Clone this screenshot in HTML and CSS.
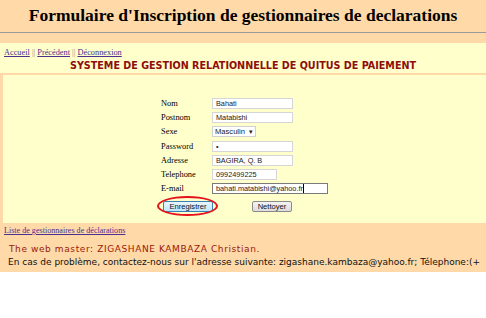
FILE: index.html
```html
<!DOCTYPE html>
<html lang="fr">
<head>
<meta charset="utf-8">
<title>Formulaire d'Inscription</title>
<link rel="stylesheet" href="styles.css">
</head>
<body>
<div class="page">
  <header class="top">
    <h1 class="title">Formulaire d'Inscription de gestionnaires de declarations</h1>
  </header>
  <div class="band"></div>
  <main class="main">
    <nav class="nav"><a href="#">Accueil</a> || <a href="#">Précédent</a> || <a href="#">Déconnexion</a></nav>
    <div class="system">SYSTEME DE GESTION RELATIONNELLE DE QUITUS DE PAIEMENT</div>
    <div class="content">
      <form class="form">
        <label class="lbl">Nom</label><input class="inp w80" type="text" value="Bahati">
        <label class="lbl">Postnom</label><input class="inp w80" type="text" value="Matabishi">
        <label class="lbl">Sexe</label><div class="sel"><span>Masculin</span><span class="arrow">▾</span></div>
        <label class="lbl">Password</label><input class="inp w80" type="password" value="a">
        <label class="lbl">Adresse</label><input class="inp w80" type="text" value="BAGIRA, Q. B">
        <label class="lbl">Telephone</label><input class="inp w65" type="text" value="0992499225">
        <label class="lbl">E-mail</label><div class="inp w115 email">bahati.matabishi@yahoo.f<span class="caret">r</span></div>
        <div class="buttons">
          <div class="btnwrap"><button type="button" class="btn primary">Enregistrer</button><span class="ring"></span></div>
          <button type="button" class="btn">Nettoyer</button>
        </div>
      </form>
    </div>
  </main>
  <footer class="foot">
    <a class="list" href="#">Liste de gestionnaires de déclarations</a>
    <p class="master">The web master: ZIGASHANE KAMBAZA Christian.</p>
    <p class="contact">En cas de problème, contactez-nous sur l'adresse suivante: zigashane.kambaza@yahoo.fr; Télephone:(+</p>
  </footer>
</div>
</body>
</html>
```
FILE: styles.css
```css
html, body {
  margin: 0;
  padding: 0;
  background: #ffffff;
  overflow: hidden;
}
.page {
  width: 486px;
  background: #ffd9a8;
  font-family: "Liberation Serif", serif;
}
.top {
  height: 32px;
  border-bottom: 1px solid #9a9a9a;
  display: flex;
  align-items: center;
  justify-content: center;
}
.title {
  margin: 0;
  font-size: 17.5px;
  font-weight: bold;
  color: #000;
  line-height: 20px;
  white-space: nowrap;
  padding-bottom: 2px;
}
.band {
  height: 10px;
}
.main {
  background: #ffffcc;
  height: 180px;
  display: flex;
  flex-direction: column;
}
.nav {
  font-size: 8.3px;
  line-height: 12px;
  margin: 4px 0 0 4px;
  color: #888;
}
.nav a, .list {
  color: #4d2f8f;
  text-decoration: underline;
}
.system {
  text-align: center;
  font-family: "DejaVu Sans", sans-serif;
  font-weight: bold;
  font-size: 9.6px;
  line-height: 13px;
  color: #8e0d0d;
  border-bottom: 2px solid #ffd9a8;
  padding-bottom: 1px;
}
.content {
  flex: 1;
  border-left: 3px solid #ffd9a8;
}
.form {
  margin: 23px 0 0 158px;
  display: grid;
  grid-template-columns: 51px auto;
  row-gap: 3.2px;
  justify-items: start;
  align-items: center;
}
.lbl {
  font-size: 8.4px;
  line-height: 11px;
  color: #000;
}
.inp {
  box-sizing: border-box;
  height: 11px;
  border: 1px solid #d6d6d6;
  background: #fff;
  padding: 0 3px;
  font-family: "Liberation Sans", sans-serif;
  font-size: 7.3px;
  line-height: 9px;
  color: #222;
  margin: 0;
  outline: none;
}
.w80 { width: 81px; }
.w65 { width: 65px; }
.w115 { width: 116px; }
.email {
  white-space: nowrap;
  overflow: hidden;
  border-color: #7a7a7a;
}
.caret {
  border-right: 1px solid #000;
}
.sel {
  box-sizing: border-box;
  height: 11px;
  width: 44px;
  border: 1px solid #d0d0d0;
  background: #fff;
  padding: 0 2px 0 2px;
  font-family: "Liberation Sans", sans-serif;
  font-size: 7.6px;
  line-height: 9px;
  display: flex;
  justify-content: space-between;
  color: #222;
}
.arrow {
  font-size: 7px;
}
.buttons {
  grid-column: 1 / 3;
  display: flex;
  gap: 39px;
  margin-top: 4px;
  margin-left: 2px;
}
.btnwrap {
  position: relative;
}
.btn {
  box-sizing: border-box;
  height: 11px;
  padding: 0;
  border: 1px solid #8a8a8a;
  border-radius: 2px;
  background: linear-gradient(#f4f4f4, #dcdcdc);
  font-family: "Liberation Sans", sans-serif;
  font-size: 7.6px;
  line-height: 9px;
  color: #111;
  display: block;
  text-align: center;
}
.btn.primary {
  width: 50px;
  border-color: #3c7fb1;
  background: linear-gradient(#eaf6fd, #bee6fd);
}
.btn:not(.primary) {
  width: 40px;
}
.ring {
  position: absolute;
  left: -6px;
  top: -5px;
  width: 61px;
  height: 20px;
  box-sizing: border-box;
  border: 2px solid #e5121b;
  border-radius: 50%;
}
.foot {
  height: 49px;
  padding-top: 2px;
  box-sizing: border-box;
}
.list {
  display: block;
  font-size: 8.1px;
  line-height: 12px;
  margin-left: 4px;
}
.master, .contact {
  margin: 0;
  white-space: nowrap;
  font-family: "DejaVu Sans", sans-serif;
  font-size: 9px;
  line-height: 13px;
}
.master {
  margin: 6px 0 0 9px;
  color: #9a1a0a;
  letter-spacing: 0.6px;
}
.contact {
  margin-left: 8px;
  color: #111;
}
```
